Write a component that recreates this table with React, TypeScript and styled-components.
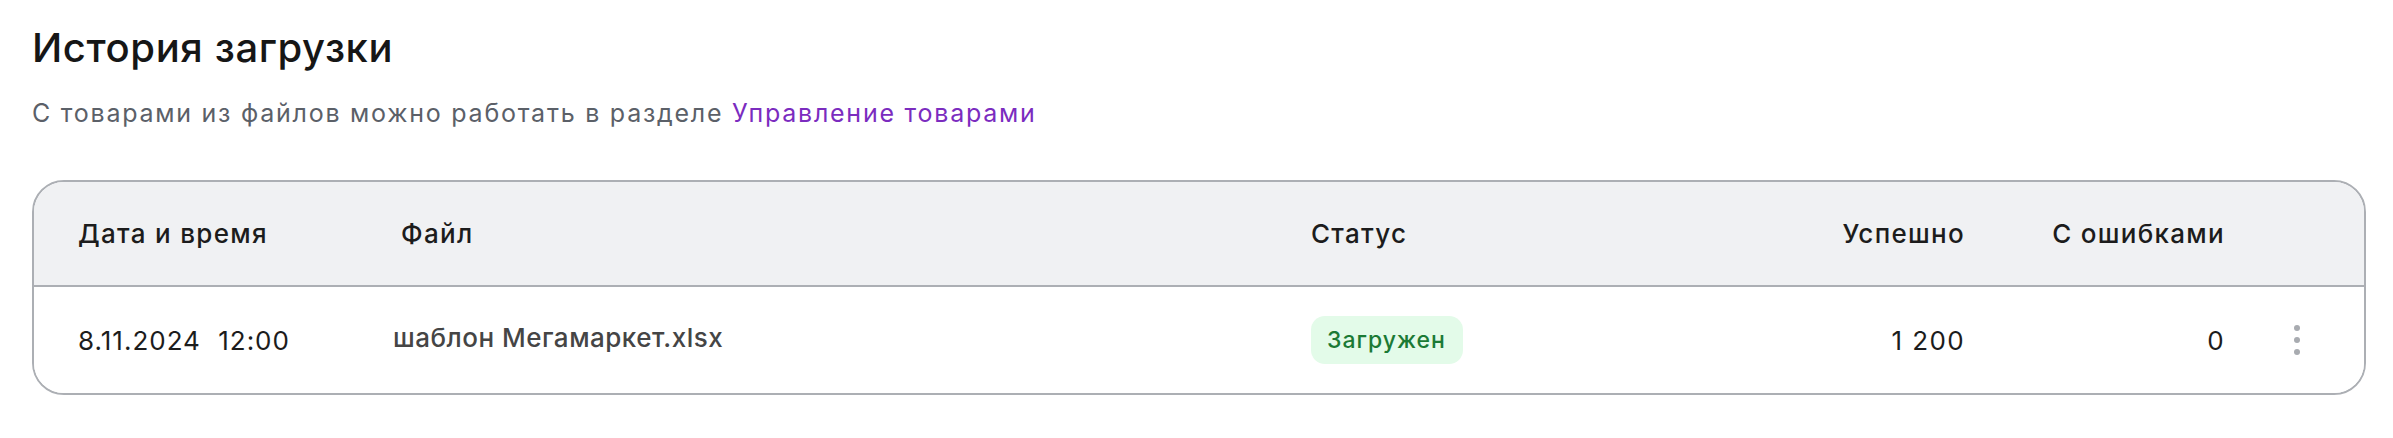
import React from "react";
import styled, { createGlobalStyle } from "styled-components";

const Global = createGlobalStyle`
  html, body { margin: 0; padding: 0; background: #ffffff; }
  body { font-family: Inter, "Noto Sans", sans-serif; color: #1a1a1a; }
`;

const Page = styled.div`
  display: flex;
  flex-direction: column;
  padding: 24px 27px 0 32px;
`;

const Title = styled.h1`
  margin: 0;
  font-size: 40px;
  line-height: 48px;
  font-weight: 500;
  letter-spacing: 0.6px;
  color: #161616;
`;

const Subtitle = styled.p`
  margin: 25px 0 0;
  font-size: 25px;
  line-height: 32px;
  font-weight: 400;
  letter-spacing: 1.75px;
  color: #5b6068;
`;

const Link = styled.a`
  color: #7b2cbf;
  text-decoration: none;
`;

const Table = styled.div`
  margin-top: 51px;
  border: 2px solid #acafb4;
  border-radius: 32px;
  overflow: hidden;
`;

const Row = styled.div<{ $head?: boolean }>`
  display: grid;
  grid-template-columns: 315px 918px 402px 251px 260px 1fr;
  align-items: center;
  padding-left: 44px;
  height: ${(p) => (p.$head ? "103px" : "106px")};
  background: ${(p) => (p.$head ? "#f0f1f3" : "#ffffff")};
  border-bottom: ${(p) => (p.$head ? "2px solid #acafb4" : "none")};
`;

const HeadCell = styled.div<{ $right?: boolean; $indent?: number }>`
  font-size: 26px;
  font-weight: 500;
  letter-spacing: 1.3px;
  color: #1c1c1c;
  text-align: ${(p) => (p.$right ? "right" : "left")};
  padding-left: ${(p) => p.$indent ?? 0}px;
  margin-right: ${(p) => (p.$right ? "-1px" : "0")};
`;

const Cell = styled.div<{ $right?: boolean }>`
  font-size: 26px;
  font-weight: 400;
  letter-spacing: ${(p) => (p.$right ? "1.4px" : "1px")};
  color: #1c1c1c;
  text-align: ${(p) => (p.$right ? "right" : "left")};
  margin-right: ${(p) => (p.$right ? "-1px" : "0")};
`;

const DateText = styled.span`
  word-spacing: 9px;
`;

const FileName = styled.div`
  font-size: 26px;
  font-weight: 500;
  letter-spacing: 0.5px;
  color: #454545;
  margin-top: -6px;
`;

const Badge = styled.span`
  display: inline-flex;
  align-items: center;
  height: 48px;
  padding: 0 17px 0 16px;
  border-radius: 14px;
  background: #e3fbe9;
  color: #1b7a35;
  font-size: 23px;
  font-weight: 500;
  letter-spacing: 1px;
`;

const MenuButton = styled.button`
  justify-self: start;
  margin-left: 70px;
  display: flex;
  flex-direction: column;
  gap: 6px;
  padding: 0;
  border: none;
  background: none;
`;

const Dot = styled.span`
  width: 6px;
  height: 6px;
  border-radius: 50%;
  background: #a8abb0;
`;

export default function App() {
  return (
    <>
      <Global />
      <Page>
        <Title>История загрузки</Title>
        <Subtitle>
          С товарами из файлов можно работать в разделе{" "}
          <Link href="#">Управление товарами</Link>
        </Subtitle>
        <Table>
          <Row $head>
            <HeadCell>Дата и время</HeadCell>
            <HeadCell $indent={8}>Файл</HeadCell>
            <HeadCell>Статус</HeadCell>
            <HeadCell $right>Успешно</HeadCell>
            <HeadCell $right>С ошибками</HeadCell>
            <div />
          </Row>
          <Row>
            <Cell>
              <DateText>8.11.2024 12:00</DateText>
            </Cell>
            <FileName>шаблон Мегамаркет.xlsx</FileName>
            <div>
              <Badge>Загружен</Badge>
            </div>
            <Cell $right>1{"\u00A0"}200</Cell>
            <Cell $right>0</Cell>
            <MenuButton aria-label="Меню">
              <Dot />
              <Dot />
              <Dot />
            </MenuButton>
          </Row>
        </Table>
      </Page>
    </>
  );
}
